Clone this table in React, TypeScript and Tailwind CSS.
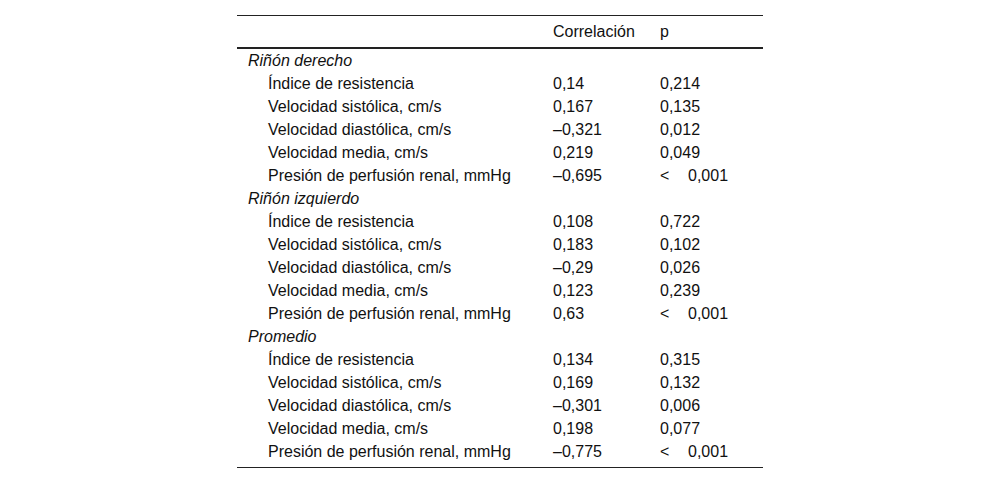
import React from "react";

type Row = { label: string; r: string; p: string; lt?: boolean };
const groups: { title: string; rows: Row[] }[] = [
  {
    title: "Riñón derecho",
    rows: [
      { label: "Índice de resistencia", r: "0,14", p: "0,214" },
      { label: "Velocidad sistólica, cm/s", r: "0,167", p: "0,135" },
      { label: "Velocidad diastólica, cm/s", r: "\u20130,321", p: "0,012" },
      { label: "Velocidad media, cm/s", r: "0,219", p: "0,049" },
      { label: "Presión de perfusión renal, mmHg", r: "\u20130,695", p: "0,001", lt: true },
    ],
  },
  {
    title: "Riñón izquierdo",
    rows: [
      { label: "Índice de resistencia", r: "0,108", p: "0,722" },
      { label: "Velocidad sistólica, cm/s", r: "0,183", p: "0,102" },
      { label: "Velocidad diastólica, cm/s", r: "\u20130,29", p: "0,026" },
      { label: "Velocidad media, cm/s", r: "0,123", p: "0,239" },
      { label: "Presión de perfusión renal, mmHg", r: "0,63", p: "0,001", lt: true },
    ],
  },
  {
    title: "Promedio",
    rows: [
      { label: "Índice de resistencia", r: "0,134", p: "0,315" },
      { label: "Velocidad sistólica, cm/s", r: "0,169", p: "0,132" },
      { label: "Velocidad diastólica, cm/s", r: "\u20130,301", p: "0,006" },
      { label: "Velocidad media, cm/s", r: "0,198", p: "0,077" },
      { label: "Presión de perfusión renal, mmHg", r: "\u20130,775", p: "0,001", lt: true },
    ],
  },
];

export default function App() {
  return (
    <div
      className="w-[1000px] h-[484px] bg-white flex justify-center pt-[15px] text-[16px] leading-none text-[#111]"
      style={{ fontFamily: '"Liberation Sans", Arial, sans-serif' }}
    >
      <div className="w-[526px] flex flex-col">
        <div className="border-t border-[#222]" />
        <div className="grid grid-cols-[316px_107px_103px] h-[31px] items-center">
          <div />
          <div>Correlación</div>
          <div>p</div>
        </div>
        <div className="border-t-2 border-[#222]" />
        <div className="pb-[4px]">
          {groups.map((g) => (
            <React.Fragment key={g.title}>
              <div className="h-[23px] flex items-center pl-[11px] italic">{g.title}</div>
              {g.rows.map((row, i) => (
                <div key={i} className="grid grid-cols-[316px_107px_103px] h-[23px] items-center">
                  <div className="pl-[31px]">{row.label}</div>
                  <div>{row.r}</div>
                  <div className="flex">
                    {row.lt ? (
                      <>
                        <span className="inline-block w-[28px]">&lt;</span>
                        <span>{row.p}</span>
                      </>
                    ) : (
                      row.p
                    )}
                  </div>
                </div>
              ))}
            </React.Fragment>
          ))}
        </div>
        <div className="border-t border-[#222]" />
      </div>
    </div>
  );
}
